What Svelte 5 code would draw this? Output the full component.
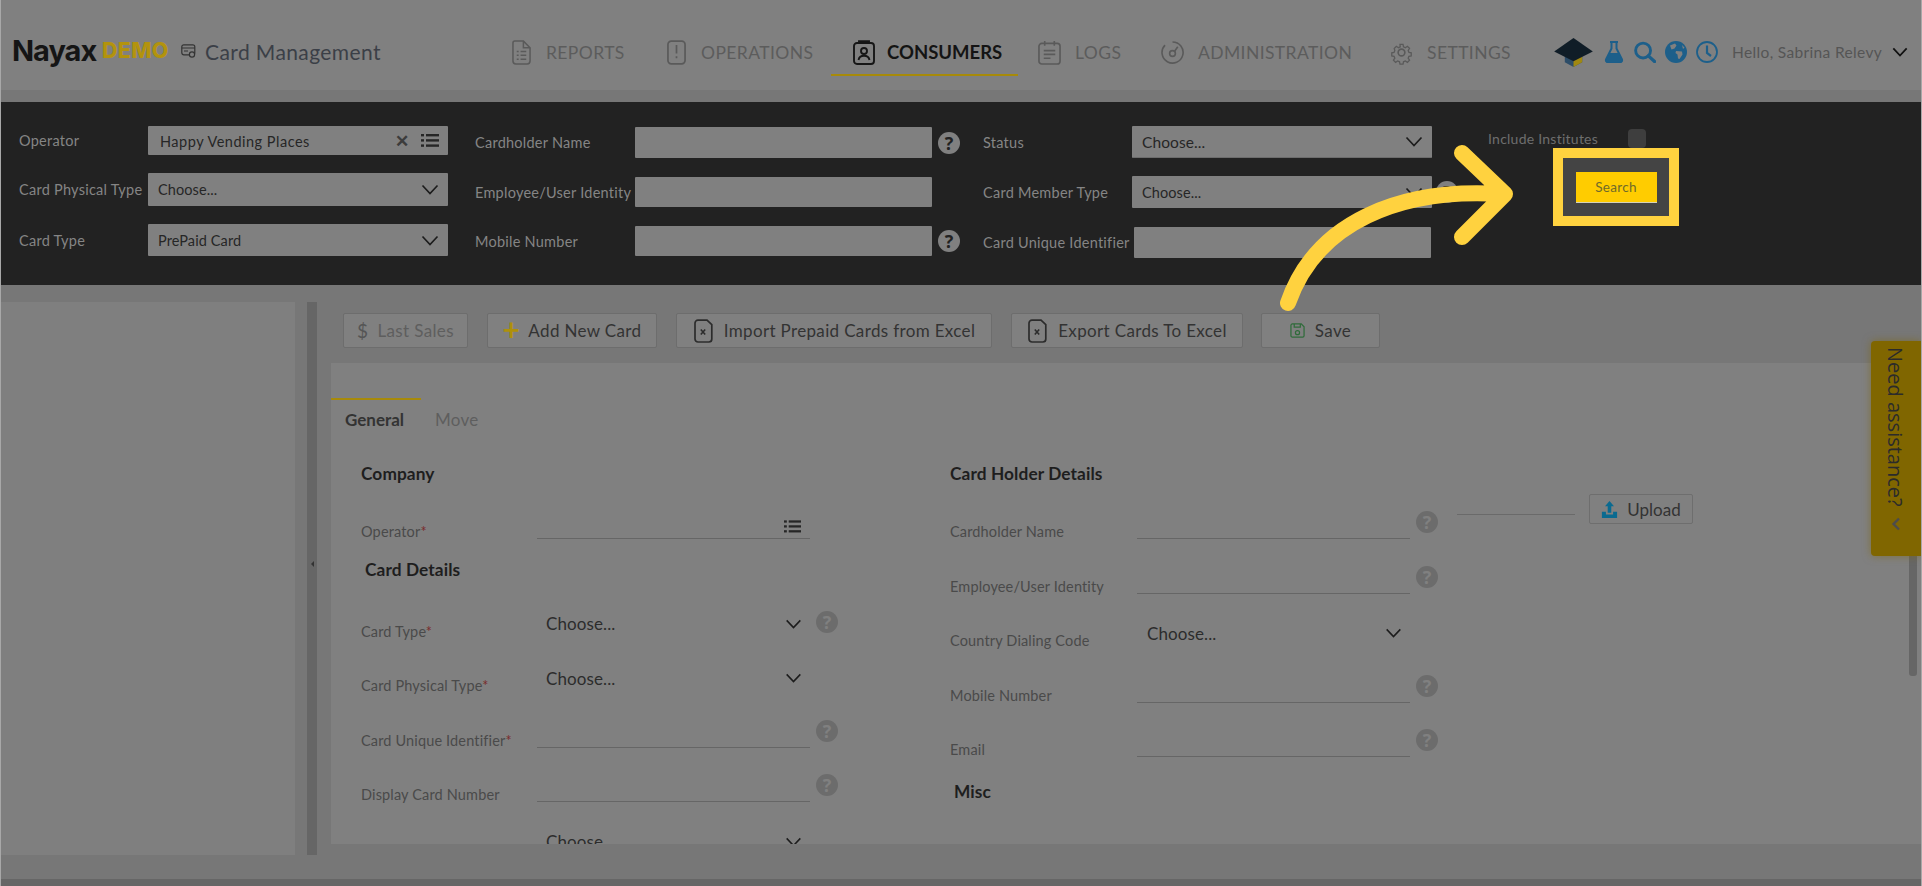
<script>
  const nav = [
    { label: 'REPORTS', icon: 'report', cls: 'w1' },
    { label: 'OPERATIONS', icon: 'phone', cls: 'w2' },
    { label: 'CONSUMERS', icon: 'badge', cls: 'w3 active' },
    { label: 'LOGS', icon: 'log', cls: 'w4' },
    { label: 'ADMINISTRATION', icon: 'admin', cls: 'w5' },
    { label: 'SETTINGS', icon: 'gear', cls: 'w6' }
  ];
  const leftFields = [
    { label: 'Card Type', req: true, type: 'select', help: true },
    { label: 'Card Physical Type', req: true, type: 'select' },
    { label: 'Card Unique Identifier', req: true, type: 'input', help: true },
    { label: 'Display Card Number', type: 'input', help: true },
    { label: 'Status', req: true, type: 'select' }
  ];
  const rightFields = [
    { label: 'Cardholder Name', type: 'input', help: true },
    { label: 'Employee/User Identity', type: 'input', help: true },
    { label: 'Country Dialing Code', type: 'select' },
    { label: 'Mobile Number', type: 'input', help: true },
    { label: 'Email', type: 'input', help: true }
  ];
</script>

{#snippet chev()}
  <svg class="chev" viewBox="0 0 18 11"><path d="M1.5 1.5 9 9.5l7.5-8" fill="none" stroke="#1c1c1c" stroke-width="1.7"/></svg>
{/snippet}
{#snippet list(cls)}
  <svg class={cls} viewBox="0 0 18 15"><g fill="#262626"><rect x="0" y="1" width="3" height="2.4"/><rect x="5" y="1" width="13" height="2.4"/><rect x="0" y="6.2" width="3" height="2.4"/><rect x="5" y="6.2" width="13" height="2.4"/><rect x="0" y="11.4" width="3" height="2.4"/><rect x="5" y="11.4" width="13" height="2.4"/></g></svg>
{/snippet}
{#snippet xfile()}
  <svg class="fileicon" viewBox="0 0 20 24"><path d="M5 1.2h9l4.8 4.5V20a3 3 0 0 1-3 3H5a3 3 0 0 1-3-3V4.2a3 3 0 0 1 3-3z" fill="none" stroke="#2c2c2c" stroke-width="1.7"/><path d="M7.800 10.500l4.400 5M12.200 10.500l-4.400 5" stroke="#2c2c2c" stroke-width="1.6"/></svg>
{/snippet}
{#snippet navicon(name)}
  {#if name === 'report'}
    <svg class="nicon" viewBox="0 0 20 26" fill="none" stroke="#5a5a5a" stroke-width="1.6"><path d="M3 1h9l7 7v14a3 3 0 0 1-3 3H4a3 3 0 0 1-3-3V3a2 2 0 0 1 2-2z"/><path d="M12 1v7h7M5 12h2M9 12h6M5 16h2M9 16h6M5 20h2M9 20h6"/></svg>
  {:else if name === 'phone'}
    <svg class="nicon" viewBox="0 0 20 26" fill="none" stroke="#5a5a5a" stroke-width="1.8"><rect x="1" y="1" width="18" height="24" rx="3.500"/><path d="M10 5v9M10 17v2"/></svg>
  {:else if name === 'badge'}
    <svg class="nicon wide" viewBox="0 0 22 25" fill="none" stroke="#161616" stroke-width="1.9"><rect x="1" y="3" width="20" height="21" rx="3"/><path d="M6 3V1.200h10V3"/><circle cx="11" cy="11" r="3"/><path d="M5.500 20c.6-3 2.600-4.200 5.500-4.200s4.900 1.200 5.500 4.200"/></svg>
  {:else if name === 'log'}
    <svg class="nicon wider" viewBox="0 0 24 26" fill="none" stroke="#5a5a5a" stroke-width="1.7"><rect x="1" y="3.500" width="22" height="21.500" rx="3"/><path d="M7 1v5M17 1v5M6 11h12M6 15h12M6 19h7"/></svg>
  {:else if name === 'admin'}
    <svg class="nicon wider" viewBox="0 0 24 26" fill="none" stroke="#5a5a5a" stroke-width="1.700"><path d="M12 2a11 11 0 1 1-7.800 3.300"/><circle cx="12" cy="14" r="3"/><path d="M14 12l3.500-5"/></svg>
  {:else}
    <svg class="nicon wider" viewBox="0 0 24 24" fill="none" stroke="#5a5a5a" stroke-width="1.700"><circle cx="12" cy="12" r="3.500"/><path d="M10 1.500h4l.6 3.200 2.400 1 2.700-1.800 2.800 2.800-1.800 2.700 1 2.400 3 .6v4l-3 .6-1 2.400 1.800 2.700-2.800 2.800-2.700-1.800-2.400 1-.6 3h-4l-.6-3-2.400-1-2.700 1.800-2.800-2.800 1.800-2.700-1-2.400-3-.6v-4l3-.6 1-2.400L2.500 6.700l2.800-2.800 2.700 1.800 2.400-1z" transform="translate(2.400 2.400) scale(.8)"/></svg>
  {/if}
{/snippet}
{#snippet field(f)}
  <div class="field">
    <span class="flabel">{f.label}{#if f.req}<em>*</em>{/if}</span>
    {#if f.type === 'select'}
      <div class="fselect"><span>Choose...</span>{@render chev()}</div>
    {:else}
      <div class="finput"></div>
    {/if}
    {#if f.help}<span class="help light">?</span>{/if}
  </div>
{/snippet}

<div class="page">
  <header class="top">
    <div class="brand">
      <span class="nayax">Nayax</span><span class="demo">DEMO</span>
      <svg class="cardicon" viewBox="0 0 15 14" fill="none" stroke="#333" stroke-width="1.200"><rect x=".8" y=".8" width="13" height="10" rx="2"/><path d="M.8 4h13M3 7h4"/><circle cx="11" cy="10.500" r="2.600" fill="#808080"/></svg>
      <span class="title">Card Management</span>
    </div>
    <nav class="nav">
      {#each nav as n}
        <a class="navitem {n.cls}">{@render navicon(n.icon)}<span>{n.label}</span></a>
      {/each}
    </nav>
    <div class="tools">
      <svg class="cap" viewBox="0 0 40 30"><path d="M11 15v10l9 5 9-5V15z" fill="#2d4d68"/><path d="M20 20l9-5v10l-9 5z" fill="#a08810"/><path d="M20 0 40 14 20 24 0 14z" fill="#101d27"/></svg>
      <svg class="t flask" viewBox="0 0 20 22"><path d="M6 1h8M7.500 1.500v6L2 18.500A1.800 1.800 0 0 0 3.600 21h12.800a1.800 1.800 0 0 0 1.600-2.500L12.500 7.500v-6" fill="none" stroke="#1d5f8a" stroke-width="2"/><path d="M5.500 12h9l4 8-1 1.500h-15l-1-1.500z" fill="#1d5f8a"/></svg>
      <svg class="t mag" viewBox="0 0 23 22"><circle cx="9.500" cy="9.500" r="7.800" fill="none" stroke="#1d5f8a" stroke-width="3"/><path d="M15 15l6.500 6" stroke="#1d5f8a" stroke-width="3.400" stroke-linecap="round"/></svg>
      <svg class="t globe" viewBox="0 0 22 22"><circle cx="11" cy="11" r="11" fill="#1d5f8a"/><path d="M5 4.500l5-2 1.500 2-2 3-3 1zM11 10l6 .5.500 3-3 4.500-1.500-.5-.5-4-2-1.500zM17 4l2.500 2.500L18 8z" fill="#808080"/></svg>
      <svg class="t clock" viewBox="0 0 22 22" fill="none" stroke="#1d5f8a" stroke-width="1.800"><circle cx="11" cy="11" r="10"/><path d="M11 4.500V12l4 3" stroke-width="2.200"/></svg>
      <span class="hello">Hello, Sabrina Relevy</span>
      <svg class="hellochev" viewBox="0 0 18 11"><path d="M1.500 1.500 9 9.500l7.500-8" fill="none" stroke="#111" stroke-width="2"/></svg>
    </div>
  </header>
  <div class="band"></div>

  <section class="filter">
    <div class="fcol c1">
      <div class="frow"><label>Operator</label><div class="ctl op"><span>Happy Vending Places</span><b>✕</b>{@render list('flist')}</div></div>
      <div class="frow"><label>Card Physical Type</label><div class="ctl sel"><span>Choose...</span>{@render chev()}</div></div>
      <div class="frow"><label>Card Type</label><div class="ctl sel"><span>PrePaid Card</span>{@render chev()}</div></div>
    </div>
    <div class="fcol c2">
      <div class="frow"><label>Cardholder Name</label><div class="ctl"></div><span class="help dark">?</span></div>
      <div class="frow"><label>Employee/User Identity</label><div class="ctl"></div></div>
      <div class="frow"><label>Mobile Number</label><div class="ctl"></div><span class="help dark">?</span></div>
    </div>
    <div class="fcol c3">
      <div class="frow"><label>Status</label><div class="ctl sel status"><span>Choose...</span>{@render chev()}</div></div>
      <div class="frow"><label>Card Member Type</label><div class="ctl sel"><span>Choose...</span>{@render chev()}</div><span class="help dark">?</span></div>
      <div class="frow"><label>Card Unique Identifier</label><div class="ctl uid"></div></div>
    </div>
    <div class="c4">
      <div class="inst"><label>Include Institutes</label><span class="check"></span></div>
      <div class="hilite"><button class="search">Search</button></div>
    </div>
  </section>

  <section class="work">
    <aside class="tree"></aside>
    <div class="split"><i></i></div>
    <div class="content">
      <div class="toolbar">
        <button class="btn b-last"><span class="dollar">$</span>Last Sales</button>
        <button class="btn b-add"><span class="plus">+</span>Add New Card</button>
        <button class="btn b-imp">{@render xfile()}Import Prepaid Cards from Excel</button>
        <button class="btn b-exp">{@render xfile()}Export Cards To Excel</button>
        <button class="btn b-save"><svg class="save" viewBox="0 0 16 16" fill="none" stroke="#2f6b3a" stroke-width="1.300"><path d="M1 2.500A1.500 1.500 0 0 1 2.500 1H12l3 3v9.500a1.500 1.500 0 0 1-1.500 1.500h-11A1.500 1.500 0 0 1 1 13.500z"/><path d="M4.500 1v3.500h6.500V1"/><circle cx="8" cy="10.300" r="2.200"/></svg>Save</button>
      </div>
      <div class="pane">
        <div class="tabs"><span class="tab on">General</span><span class="tab">Move</span></div>
        <div class="cols">
          <div class="col left">
            <h4>Company</h4>
            <div class="field op-field"><span class="flabel">Operator<em>*</em></span><div class="finput">{@render list('ilist')}</div></div>
            <h4 class="details">Card Details</h4>
            {#each leftFields as f}{@render field(f)}{/each}
          </div>
          <div class="col right">
            <h4>Card Holder Details</h4>
            <div class="short">{@render field(rightFields[0])}</div>
            {#each rightFields.slice(1) as f}{@render field(f)}{/each}
            <h4 class="misc">Misc</h4>
          </div>
          <div class="upload">
            <div class="upline"></div>
            <button class="upbtn"><svg viewBox="0 0 17 19"><path d="M8.500 0l5 6H10.500v7h-4V6H3.500z" fill="#0a6a90"/><path d="M0 12h4.500v3h8v-3H17v7H0z" fill="#0a6a90"/></svg>Upload</button>
          </div>
        </div>
      </div>
    </div>
  </section>
  <div class="foot"></div>

  <div class="scrollbar"></div>
  <aside class="assist"><span>Need assistance?</span><svg viewBox="0 0 10 14"><path d="M8 1.500 2.500 7 8 12.500" fill="none" stroke="#4c4c4c" stroke-width="2.400"/></svg></aside>
  <svg class="arrow" viewBox="0 0 1922 886"><path d="M1288 303C1316 222 1400 188 1500 194M1462 153l43 41-43 43" fill="none" stroke="#ffd23f" stroke-width="16" stroke-linecap="round" stroke-linejoin="round"/></svg>
</div>

<style>
  :global(body) { margin: 0; background: #777; overflow: hidden; }
  .page {
    position: relative; width: 1920px; height: 886px; overflow: hidden;
    border-left: 1px solid #a8a8a8; border-right: 1px solid #a8a8a8;
    display: flex; flex-direction: column; background: #777;
    font-family: "Lato", "Open Sans", sans-serif; color: #333;
  }
  svg { display: block; flex: none; }
  .top { height: 76px; padding-top: 14px; display: flex; align-items: center; background: #808080; }
  .brand { width: 511px; display: flex; align-items: center; flex: none; padding-left: 11px; box-sizing: border-box; margin-top: -4px; }
  .nayax { font: 700 29px/1 "Inter", sans-serif; letter-spacing: -1px; color: #151515; width: 89px; }
  .demo { font: 800 21.500px/1 "Inter", sans-serif; letter-spacing: .3px; color: #b3930d; width: 79px; margin-left: 1px; margin-top: 1px; }
  .cardicon { width: 15px; height: 14px; margin-right: 9px; margin-top: 2px; }
  .title { font-size: 21px; color: #3b3f47; letter-spacing: .4px; font-weight: 400; white-space: nowrap; margin-top: 2px; }
  .nav { display: flex; flex: none; width: 1042px; height: 100%; align-items: center; }
  .navitem { position: relative; display: flex; align-items: center; gap: 15px; color: #5c5c5c; font-size: 17.500px; letter-spacing: .4px; flex: none; white-space: nowrap; }
  .w1 { width: 155px; } .w2 { width: 186px; } .w3 { width: 185px; } .w4 { width: 123px; } .w5 { width: 229px; } .w6 { width: 164px; }
  .navitem.active { color: #141414; font-weight: 700; font-size: 18.500px; letter-spacing: 0; gap: 12px; }
  .navitem.active::after { content: ""; position: absolute; left: -22px; top: 34px; width: 187px; height: 2px; background: #a78a0a; }
  .nicon { width: 19px; height: 25px; }
  .nicon.wide { width: 22px; height: 25px; }
  .nicon.wider { width: 23px; height: 25px; margin-right: -1px; }
  .tools { display: flex; align-items: center; flex: none; }
  .cap { width: 39px; height: 29px; margin-right: 10px; }
  .t { width: 22px; height: 22px; margin-right: 9px; }
  .hello { margin-left: 8px; margin-left: 5px; width: 160px; font-size: 15.500px; color: #555; letter-spacing: .35px; white-space: nowrap; }
  .hellochev { width: 16px; height: 10px; }
  .band { height: 12px; background: #777; }

  .filter { height: 183px; background: #222; display: flex; padding-left: 18px; box-sizing: border-box; }
  .fcol { display: flex; flex-direction: column; flex: none; }
  .frow { display: grid; align-items: center; position: relative; }
  label { font-size: 14.500px; color: #858585; white-space: nowrap; letter-spacing: .25px; }
  .ctl { background: #808080; box-sizing: border-box; border-radius: 1px; height: 100%; display: flex; align-items: center; font-size: 14.500px; color: #262626; letter-spacing: .1px; }
  .sel { padding: 0 9px 0 10px; justify-content: space-between; }
  .sel .chev { width: 18px; height: 11px; }
  .c1 { width: 456px; padding-top: 24px; }
  .c1 .frow { grid-template-columns: 129px 300px; }
  .c1 .frow:nth-child(1) { height: 29px; }
  .c1 .frow:nth-child(2) { height: 33px; margin-top: 18px; }
  .c1 .frow:nth-child(3) { height: 32px; margin-top: 18px; }
  .op { padding: 0 9px 0 12px; letter-spacing: .5px; }
  .op span { flex: 1; margin-top: 2px; }
  .op b { color: #3c3c3c; font-size: 17px; margin-right: 12px; font-weight: 700; }
  .flist { width: 18px; height: 15px; }
  .c2 { width: 508px; padding-top: 25px; }
  .c2 .frow { grid-template-columns: 160px 297px 24px; column-gap: 0; }
  .c2 .frow:nth-child(1) { height: 31px; }
  .c2 .frow:nth-child(2) { height: 30px; margin-top: 19px; }
  .c2 .frow:nth-child(3) { height: 30px; margin-top: 19px; }
  .help { width: 22px; height: 22px; border-radius: 50%; font: 700 18px/22px "Open Sans", sans-serif; text-align: center; flex: none; }
  .help.dark { background: #808080; color: #222; margin-left: 6px; }
  .help.light { background: #6c6c6c; color: #808080; }
  .c3 { width: 505px; padding-top: 24px; }
  .c3 .frow { grid-template-columns: 149px 300px 24px; }
  .c3 .frow:nth-child(1) { height: 32px; }
  .c3 .frow:nth-child(2) { height: 32px; margin-top: 18px; }
  .c3 .frow:nth-child(3) { height: 31px; margin-top: 19px; }
  .c3 .help { margin-left: 4px; }
  .uid { width: 297px; margin-left: 2px; }
  .status { font-size: 15.500px; border-bottom: 1px solid #6c6c6c; }
  .c4 { flex: none; padding-top: 26px; width: 200px; }
  .inst { display: flex; align-items: center; height: 20px; }
  .inst label { width: 140px; font-size: 14px; color: #6e6e6e; }
  .check { width: 18px; height: 19px; border-radius: 4px; background: #3e3e3e; border: 0; }
  .hilite { margin: 0 0 0 65px; width: 126px; height: 78px; box-sizing: border-box; border: 10px solid #ffd23f; background: #444; display: flex; align-items: center; justify-content: center; }
  .search { width: 81px; height: 31px; background: #ffcc00; border: 0; border-bottom: 1px solid #d6d2b8; padding: 0; font: 13.500px "Lato", sans-serif; letter-spacing: .3px; color: #6f6a2a; }

  .work { height: 594px; display: flex; flex: none; }
  .tree { width: 294px; height: 553px; margin-top: 17px; background: #7f7f7f; flex: none; }
  .split { width: 10px; height: 553px; margin: 17px 0 0 12px; background: #666; flex: none; display: flex; align-items: center; justify-content: center; }
  .split i { width: 0; height: 0; border: 3px solid transparent; border-right-color: #333; border-left: 0; margin-top: -30px; }
  .content { margin-left: 14px; flex: 1; min-width: 0; }
  .toolbar { display: flex; padding: 28px 0 0 12px; height: 35px; gap: 0; }
  .btn { height: 35px; box-sizing: border-box; background: #808080; border: 1px solid #6d6d6d; border-radius: 2px; display: flex; align-items: center; justify-content: center; font: 17px "Lato", sans-serif; letter-spacing: .35px; color: #333; padding: 0; flex: none; white-space: nowrap; }
  .b-last { width: 125px; color: #5e5e5e; margin-right: 19px; }
  .dollar { font-size: 19px; margin-right: 9px; color: #555; }
  .b-add { width: 170px; margin-right: 19px; }
  .plus { color: #ae900b; font-size: 30px; font-weight: 700; margin-right: 8px; line-height: 1; margin-top: -3px; }
  .b-imp { width: 316px; margin-right: 19px; }
  .b-exp { width: 232px; margin-right: 18px; }
  .b-save { width: 119px; }
  .fileicon { width: 20px; height: 24px; margin-right: 11px; }
  .save { width: 15px; height: 15px; margin-right: 10px; }
  .pane { margin-top: 15px; height: 481px; background: #808080; overflow: hidden; }
  .tabs { height: 99px; display: flex; align-items: flex-start; padding-top: 35px; box-sizing: border-box; font-size: 17px; letter-spacing: .3px; }
  .tab { color: #5e5e5e; margin-left: 14px; padding-top: 11px; }
  .tab.on { color: #333; font-weight: 700; margin-left: 0; width: 90px; border-top: 2px solid #a78a0a; padding-left: 14px; box-sizing: border-box; padding-top: 9px; letter-spacing: 0; margin-right: 0; white-space: nowrap; }
  .cols { display: flex; position: relative; }
  .col { flex: none; }
  .col.left { width: 589px; margin-left: 30px; }
  .col.right { width: 506px; }
  h4 { margin: 0; height: 24px; line-height: 24px; font-size: 17.300px; font-weight: 700; color: #1e1e1e; letter-spacing: .1px; }
  .details { margin: 19px 0 0 4px; height: 26px; }
  .misc { margin: 23px 0 0 4px; }
  .field { display: grid; grid-template-columns: 176px 273px 28px; column-gap: 0; height: 54.500px; align-items: end; position: relative; }
  .field .help { position: absolute; left: 455px; top: 26.500px; }
  .op-field { height: 53px; }
  .col.right .field { grid-template-columns: 187px 273px 28px; }
  .col.right .field .help { left: 466px; }
  .short { height: 53px; }
  .short .field { height: 53px; }
  .col.right .short .field .help { top: 25px; }
  .flabel { font-size: 14.500px; color: #4a4a4a; line-height: 14px; letter-spacing: .15px; white-space: nowrap; }
  .flabel em { color: #7a2c2c; font-style: normal; }
  .finput { height: 24px; border-bottom: 1px solid #666; position: relative; box-sizing: border-box; }
  .ilist { width: 17px; height: 15px; position: absolute; right: 9px; top: 4px; }
  .fselect { height: 30px; padding: 0 8px 0 9px; box-sizing: border-box; display: flex; justify-content: space-between; align-items: center; font-size: 17px; color: #2c2c2c; letter-spacing: .1px; }
  .fselect .chev { width: 17px; height: 10px; }
  .col.right .fselect { padding-left: 10px; }
  .upload { display: flex; align-items: flex-start; padding-top: 32px; }
  .upline { width: 118px; height: 1px; background: #6a6a6a; margin: 20px 14px 0 1px; }
  .upbtn { width: 104px; height: 30px; box-sizing: border-box; background: #808080; border: 1px solid #6e6e6e; border-radius: 2px; display: flex; align-items: center; justify-content: center; gap: 9px; font: 17px "Lato", sans-serif; color: #333; padding: 0; }
  .upbtn svg { width: 17px; height: 17px; }
  .foot { height: 7px; background: #666; flex: none; }

  .scrollbar { position: absolute; left: 1908px; top: 500px; width: 8px; height: 176px; border-radius: 3px; background: #666; }
  .assist {
    position: absolute; right: 0; top: 341px; width: 50px; height: 215px; box-sizing: border-box;
    background: #806600; border-radius: 4px 0 0 4px; box-shadow: 0 0 8px rgba(128,102,0,.55);
    display: flex; flex-direction: column; align-items: center; padding-top: 6px; color: #2b2b2b;
  }
  .assist span { writing-mode: vertical-rl; font: 20px "Open Sans", sans-serif; line-height: 24px; white-space: nowrap; margin-right: 2px; }
  .assist svg { width: 10px; height: 14px; margin-top: 10px; }
  .arrow { position: absolute; left: -1px; top: 0; width: 1922px; height: 886px; pointer-events: none; }
</style>
